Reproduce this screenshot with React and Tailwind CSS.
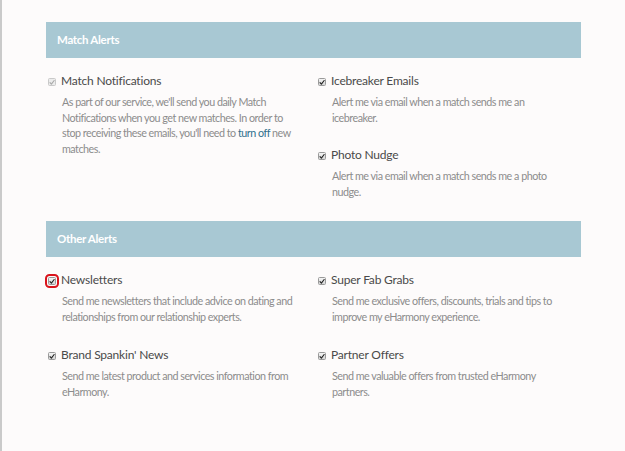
import React from "react";

function Check({ disabled, focused }) {
  return (
    <span
      className={
        "mt-[5px] ml-[2px] mr-[5px] inline-flex h-[8px] w-[8px] shrink-0 items-center justify-center rounded-[1.5px] border " +
        (disabled
          ? "border-[#c9c9c9] bg-[#ececec]"
          : "border-[#9a9a9a] bg-gradient-to-b from-[#f4f4f4] to-[#d6d6d6]") +
        (focused ? " outline-2 outline-[#d9141c] outline-offset-[1px]" : "")
      }
    >
      <svg width="7" height="7" viewBox="0 0 7 7" className="block">
        <path
          d="M1.2 3.6 L2.8 5.4 L6 1.2"
          fill="none"
          stroke={disabled ? "#a9a9a9" : "#222"}
          strokeWidth="1.3"
          strokeLinecap="round"
          strokeLinejoin="round"
        />
      </svg>
    </span>
  );
}

function Item({ title, children, disabled, focused }) {
  return (
    <div className="flex flex-col">
      <div className="flex items-start">
        <Check disabled={disabled} focused={focused} />
        <span className="whitespace-nowrap text-[12px] leading-[16px] tracking-[-0.2px] text-[#4a4a4a]">
          {title}
        </span>
      </div>
      <p className="mt-[5px] whitespace-nowrap pl-[16px] text-[10.75px] leading-[15.5px] tracking-[-0.5px] text-[#8c8c8c]">
        {children}
      </p>
    </div>
  );
}

function Header({ children }) {
  return (
    <div className="flex h-[36px] w-[535px] items-center bg-[#a8c8d3] pl-[11px] text-[11.5px] font-bold tracking-[-0.3px] text-white">
      {children}
    </div>
  );
}

export default function App() {
  return (
    <div
      className="min-h-[451px] w-[625px] border-l-2 border-[#cacaca] bg-[#fdfbfb] pl-[44px] pt-[22px]"
      style={{ fontFamily: "Lato, 'Open Sans', sans-serif" }}
    >
      <Header>Match Alerts</Header>
      <div className="mt-[15px] grid grid-cols-[270px_265px] gap-y-[22px]">
        <div className="row-span-2">
          <Item title="Match Notifications" disabled>
            As part of our service, we'll send you daily Match
            <br />
            Notifications when you get new matches. In order to
            <br />
            stop receiving these emails, you'll need to{" "}
            <span className="text-[#2d6f8c]">turn off</span> new
            <br />
            matches.
          </Item>
        </div>
        <Item title="Icebreaker Emails">
          Alert me via email when a match sends me an
          <br />
          icebreaker.
        </Item>
        <Item title="Photo Nudge">
          Alert me via email when a match sends me a photo
          <br />
          nudge.
        </Item>
      </div>
      <div className="mt-[22px]">
        <Header>Other Alerts</Header>
      </div>
      <div className="mt-[15px] grid grid-cols-[270px_265px] gap-y-[23px]">
        <Item title="Newsletters" focused>
          Send me newsletters that include advice on dating and
          <br />
          relationships from our relationship experts.
        </Item>
        <Item title="Super Fab Grabs">
          Send me exclusive offers, discounts, trials and tips to
          <br />
          improve my eHarmony experience.
        </Item>
        <Item title="Brand Spankin' News">
          Send me latest product and services information from
          <br />
          eHarmony.
        </Item>
        <Item title="Partner Offers">
          Send me valuable offers from trusted eHarmony
          <br />
          partners.
        </Item>
      </div>
    </div>
  );
}
